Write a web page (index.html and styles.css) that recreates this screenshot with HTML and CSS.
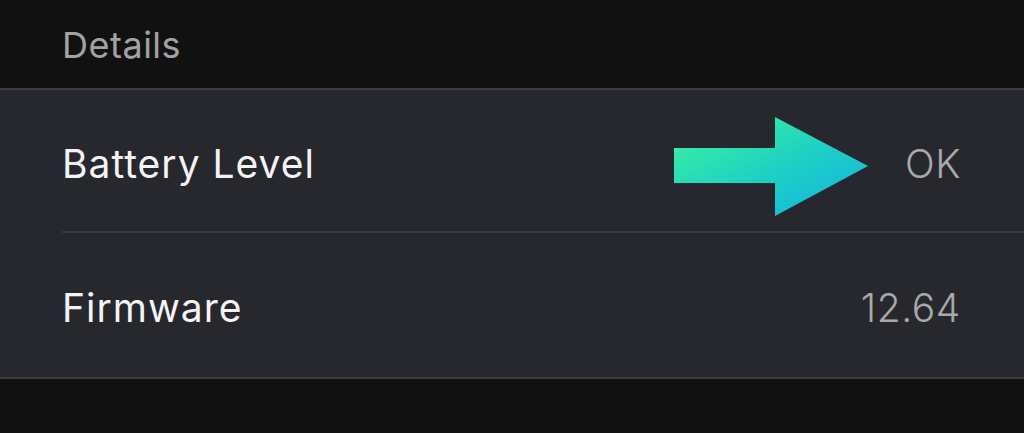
FILE: index.html
```html
<!DOCTYPE html>
<html>
<head>
<meta charset="utf-8">
<link rel="stylesheet" href="styles.css">
</head>
<body>
<div class="page">
  <div class="section-header">Details</div>
  <div class="group">
    <div class="row row-first">
      <div class="row-inner">
        <span class="label">Battery Level</span>
        <span class="value">OK</span>
      </div>
      <svg class="arrow" width="194" height="99" viewBox="0 0 194 99">
        <defs>
          <linearGradient id="ag" x1="0" y1="0" x2="1" y2="1">
            <stop offset="0" stop-color="#3ef79a"/>
            <stop offset="0.5" stop-color="#1fd2c2"/>
            <stop offset="1" stop-color="#11b2e2"/>
          </linearGradient>
        </defs>
        <polygon points="0,31 101,31 101,0 194,49 101,99 101,66 0,66" fill="url(#ag)"/>
      </svg>
    </div>
    <div class="row row-last">
      <div class="row-inner">
        <span class="label">Firmware</span>
        <span class="value">12.64</span>
      </div>
    </div>
  </div>
</div>
</body>
</html>
```
FILE: styles.css
```css
html, body {
  margin: 0;
  padding: 0;
  background: #111111;
}
.page {
  width: 1024px;
  height: 433px;
  overflow: hidden;
  font-family: Inter, "Noto Sans", sans-serif;
}
.section-header {
  box-sizing: border-box;
  height: 88px;
  padding: 23px 0 0 62px;
  font-size: 36px;
  line-height: 44px;
  letter-spacing: 0.5px;
  color: #a2a2a4;
}
.group {
  background: #26282d;
  border-top: 2px solid #3b3c41;
  border-bottom: 2px solid #3b3c41;
}
.row {
  position: relative;
}
.row-inner {
  box-sizing: border-box;
  margin-left: 62px;
  padding-right: 63px;
  padding-top: 5px;
  display: flex;
  align-items: center;
  justify-content: space-between;
}
.row-first .row-inner {
  height: 143px;
  border-bottom: 2px solid #3a3b40;
}
.row-last .row-inner {
  height: 144px;
  padding-top: 4px;
}
.label {
  font-size: 39px;
  letter-spacing: 1px;
  color: #f4f4f4;
}
.value {
  font-size: 39px;
  font-weight: 300;
  letter-spacing: 0.6px;
  color: #a9a9ab;
}
.arrow {
  position: absolute;
  left: 674px;
  top: 27px;
}
```
